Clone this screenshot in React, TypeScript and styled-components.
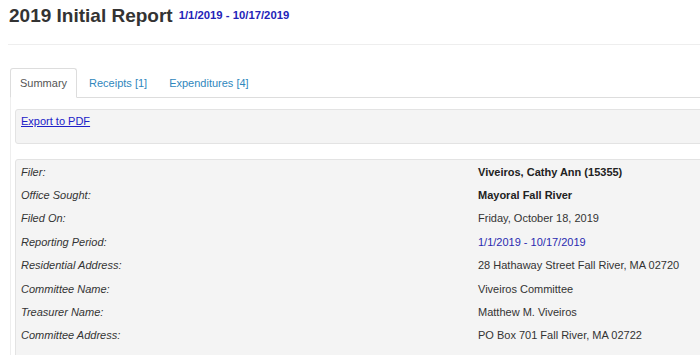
import React from "react";
import styled, { createGlobalStyle } from "styled-components";

const Global = createGlobalStyle`
  html, body { margin: 0; padding: 0; background: #fff; overflow: hidden; }
  body { font-family: "Liberation Sans", Arial, sans-serif; color: #333; }
`;

const Page = styled.div`
  padding: 0 0 0 8px;
  width: 780px;
  height: 355px;
  overflow: hidden;
`;

const Header = styled.div`
  padding: 4px 0 0 1px;
  height: 40px;
  border-bottom: 1px solid #eeeeee;
`;

const Title = styled.h1`
  margin: 0;
  font-size: 19px;
  line-height: 22px;
  font-weight: bold;
  color: #333;
`;

const DateRange = styled.small`
  font-size: 11.3px;
  font-weight: bold;
  color: #2323b8;
  margin-left: 6px;
  vertical-align: 2.5px;
`;

const TabsArea = styled.div`
  margin: 23px 0 0 2px;
`;

const TabNav = styled.div`
  display: flex;
  border-bottom: 1px solid #dddddd;
  height: 29px;
`;

const Tab = styled.div<{ $active?: boolean }>`
  height: 28px;
  line-height: 28px;
  padding: 0 9px;
  margin-right: 2px;
  font-size: 11px;
  border: 1px solid ${(p) => (p.$active ? "#dddddd" : "transparent")};
  border-bottom-color: ${(p) => (p.$active ? "#fff" : "transparent")};
  border-radius: 3px 3px 0 0;
  background: ${(p) => (p.$active ? "#fff" : "transparent")};
  color: ${(p) => (p.$active ? "#555" : "#2f87bd")};
`;

const TabContent = styled.div`
  border-left: 1px solid #eeeeee;
  padding: 11px 0 0 4px;
  height: 300px;
`;

const Panel = styled.div<{ $gap?: number }>`
  background: #f4f4f4;
  border: 1px solid #e3e3e3;
  border-radius: 3px;
  margin-top: ${(p) => p.$gap ?? 0}px;
`;

const ExportPanel = styled(Panel)`
  padding: 4px 5px 14px;
  line-height: 15px;
  font-size: 11px;
`;

const ExportLink = styled.a`
  color: #2020c8;
  text-decoration: underline;
  cursor: pointer;
`;

const InfoPanel = styled(Panel)`
  padding: 0 5px 30px;
`;

const Row = styled.div`
  display: grid;
  grid-template-columns: 457px 1fr;
  align-items: center;
  height: 23.4px;
  font-size: 11px;
`;

const Label = styled.span`
  font-style: italic;
  color: #333;
`;

const Value = styled.span<{ $bold?: boolean; $blue?: boolean }>`
  font-weight: ${(p) => (p.$bold ? "bold" : "normal")};
  color: ${(p) => (p.$blue ? "#2a2ab0" : p.$bold ? "#222" : "#333")};
`;

const rows: { label: string; value: string; bold?: boolean; blue?: boolean }[] = [
  { label: "Filer:", value: "Viveiros, Cathy Ann (15355)", bold: true },
  { label: "Office Sought:", value: "Mayoral Fall River", bold: true },
  { label: "Filed On:", value: "Friday, October 18, 2019" },
  { label: "Reporting Period:", value: "1/1/2019 - 10/17/2019", blue: true },
  { label: "Residential Address:", value: "28 Hathaway Street Fall River, MA 02720" },
  { label: "Committee Name:", value: "Viveiros Committee" },
  { label: "Treasurer Name:", value: "Matthew M. Viveiros" },
  { label: "Committee Address:", value: "PO Box 701 Fall River, MA 02722" },
];

export default function App() {
  return (
    <>
      <Global />
      <Page>
        <Header>
          <Title>
            2019 Initial Report<DateRange>1/1/2019 - 10/17/2019</DateRange>
          </Title>
        </Header>
        <TabsArea>
          <TabNav>
            <Tab $active>Summary</Tab>
            <Tab>Receipts [1]</Tab>
            <Tab>Expenditures [4]</Tab>
          </TabNav>
          <TabContent>
            <ExportPanel>
              <ExportLink>Export to PDF</ExportLink>
            </ExportPanel>
            <InfoPanel $gap={15}>
              {rows.map((r) => (
                <Row key={r.label}>
                  <Label>{r.label}</Label>
                  <Value $bold={r.bold} $blue={r.blue}>
                    {r.value}
                  </Value>
                </Row>
              ))}
            </InfoPanel>
          </TabContent>
        </TabsArea>
      </Page>
    </>
  );
}
